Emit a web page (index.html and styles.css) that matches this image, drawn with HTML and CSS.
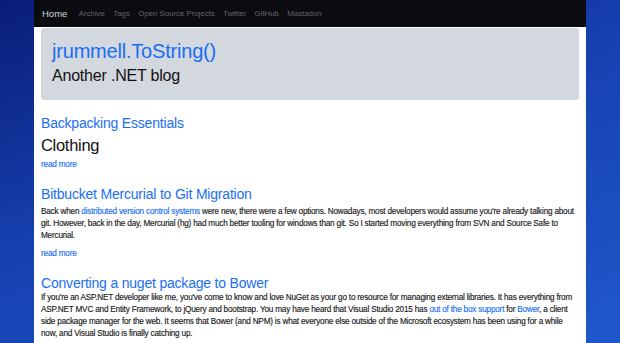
FILE: index.html
```html
<!DOCTYPE html>
<html>
	<head>
		<title>jrummell.ToString()</title>
		<link rel="stylesheet" href="styles.css">
	</head>
	<body>
		<div class="page">
			<div class="navbar">
				<a class="brand" href="#">Home</a>
				<a href="#">Archive</a>
				<a href="#">Tags</a>
				<a href="#">Open Source Projects</a>
				<a href="#">Twitter</a>
				<a href="#">GitHub</a>
				<a href="#">Mastadon</a>
			</div>
			<div class="main">
				<div class="jumbotron">
					<h1><a href="#">jrummell.ToString()</a></h1>
					<p class="lead">Another .NET blog</p>
				</div>

				<div class="post">
					<h2><a href="#">Backpacking Essentials</a></h2>
					<h3>Clothing</h3>
					<a class="more" href="#">read more</a>
				</div>

				<div class="post">
					<h2><a href="#">Bitbucket Mercurial to Git Migration</a></h2>
					<p>Back when <a href="#">distributed version control systems</a> were new, there were a few options. Nowadays, most developers would assume you're already talking about git. However, back in the day, Mercurial (hg) had much better tooling for windows than git. So I started moving everything from SVN and Source Safe to Mercurial.</p>
					<a class="more" href="#">read more</a>
				</div>

				<div class="post last">
					<h2><a href="#">Converting a nuget package to Bower</a></h2>
					<p>If you're an ASP.NET developer like me, you've come to know and love NuGet as your go to resource for managing external libraries. It has everything from ASP.NET MVC and Entity Framework, to jQuery and bootstrap. You may have heard that Visual Studio 2015 has <a href="#">out of the box support</a> for <a href="#">Bower</a>, a client side package manager for the web. It seems that Bower (and NPM) is what everyone else outside of the Microsoft ecosystem has been using for a while now, and Visual Studio is finally catching up.</p>
				</div>
			</div>
		</div>
	</body>
</html>
```

FILE: styles.css
```css
body {
	margin: 0;
	font-family: "Liberation Sans", Arial, sans-serif;
	background: linear-gradient(160deg, #0a1d78 0%, #1640b0 45%, #1f58cc 100%);
	min-height: 343px;
	color: #1a1a1a;
}

a {
	color: #1a6ef5;
	text-decoration: none;
}

.page {
	width: 552px;
	margin: 0 auto;
	background: #ffffff;
	min-height: 343px;
}

.navbar {
	height: 27px;
	background: #0b0c10;
	display: flex;
	align-items: center;
	gap: 8.5px;
	padding-left: 8px;
	font-size: 7.8px;
}

.navbar a {
	color: #64666b;
}

.navbar .brand {
	color: #d4d4d6;
	font-size: 9.5px;
	margin-right: 3px;
}

.main {
	padding: 1px 7px 0;
}

.jumbotron {
	background: #d3d7de;
	border-radius: 3px;
	padding: 11px 11px 10px;
	height: 51px;
}

.jumbotron h1 {
	margin: 0;
	font-size: 20px;
	font-weight: normal;
	letter-spacing: -0.2px;
	line-height: 24px;
}

.jumbotron .lead {
	margin: 2px 0 0;
	font-size: 16px;
	letter-spacing: -0.2px;
	line-height: 22px;
	color: #111111;
}

.post {
	margin-top: 14px;
}

.post h2 {
	margin: 0;
	font-size: 14px;
	font-weight: normal;
	letter-spacing: -0.2px;
	line-height: 18px;
}

.post h3 {
	margin: 2px 0 0;
	font-size: 16.5px;
	font-weight: normal;
	letter-spacing: -0.3px;
	line-height: 22px;
	color: #111111;
}

.post p {
	margin: 3px 0 0;
	font-size: 8.2px;
	letter-spacing: -0.2px;
	line-height: 12px;
	-webkit-text-stroke: 0.15px #1a1a1a;
}

.post p a {
	-webkit-text-stroke: 0.15px #1a6ef5;
}

.post.last p {
	margin-top: 0;
}

.more {
	display: block;
	margin-top: 3px;
	font-size: 8.2px;
	letter-spacing: -0.2px;
	line-height: 12px;
	-webkit-text-stroke: 0.15px #1a6ef5;
}

.post p + .more {
	margin-top: 6px;
}
```
